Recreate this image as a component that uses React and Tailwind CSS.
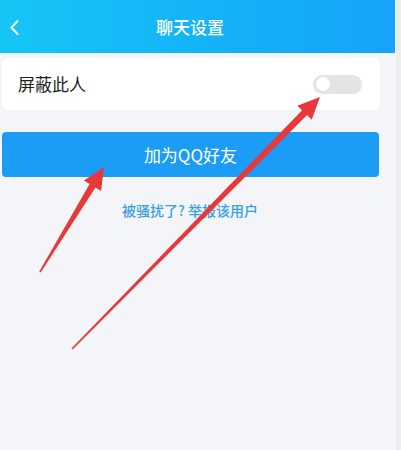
import React from "react";

// Builds a tapered arrow polygon from a tail point to a tip point.
function arrowPoints(tx, ty, px, py) {
  const dx = px - tx;
  const dy = py - ty;
  const len = Math.hypot(dx, dy);
  const ux = dx / len;
  const uy = dy / len;
  const nx = -uy;
  const ny = ux;
  const headLen = 22;
  const headHalf = 10;
  const neckHalf = 3.5;
  const tailHalf = 0.8;
  const bx = px - ux * headLen;
  const by = py - uy * headLen;
  const pts = [
    [tx + nx * tailHalf, ty + ny * tailHalf],
    [bx + nx * neckHalf, by + ny * neckHalf],
    [bx + nx * headHalf, by + ny * headHalf],
    [px, py],
    [bx - nx * headHalf, by - ny * headHalf],
    [bx - nx * neckHalf, by - ny * neckHalf],
    [tx - nx * tailHalf, ty - ny * tailHalf],
  ];
  return pts.map((p) => p.map((v) => v.toFixed(1)).join(",")).join(" ");
}

export default function App() {
  return (
    <div
      className="relative flex h-[450px] w-[401px] overflow-hidden bg-[#eceeee]"
      style={{ fontFamily: '"Noto Sans CJK SC", "Noto Sans", sans-serif' }}
    >
      <div className="flex w-[396px] flex-col bg-[#f3f5f9]">
        {/* Title bar */}
        <div className="relative flex h-[53px] w-[395px] items-center bg-gradient-to-r from-[#16c5f6] to-[#16a2f8]">
          <div className="flex w-[380px] items-center justify-center">
            <span className="text-[17px] font-medium text-white">聊天设置</span>
          </div>
          <svg
            className="absolute left-[9px] top-[19px]"
            width="12"
            height="17"
            viewBox="0 0 12 17"
            fill="none"
          >
            <path
              d="M8.5 2 L2.5 8.5 L8.5 15"
              stroke="white"
              strokeWidth="2"
              strokeLinecap="round"
              strokeLinejoin="round"
            />
          </svg>
        </div>

        {/* Block toggle row */}
        <div className="ml-[2px] mt-[5px] flex h-[52px] w-[378px] items-center justify-between rounded-[6px] bg-white pl-[16px] pr-[18px]">
          <span className="text-[17px] text-[#1d1d1d]">屏蔽此人</span>
          <div className="flex h-[19px] w-[49px] items-center rounded-full bg-[#e4e4e4] pl-[3px]">
            <div className="h-[14px] w-[14px] rounded-full bg-white" />
          </div>
        </div>

        {/* Add friend button */}
        <div className="ml-[2px] mt-[22px] flex h-[45px] w-[377px] items-center justify-center rounded-[4px] bg-[#1b9df6]">
          <span className="text-[17px] text-white">加为QQ好友</span>
        </div>

        {/* Report link */}
        <div className="mt-[23px] flex w-[380px] justify-center">
          <span className="text-[14px] font-medium text-[#3a9fe2]">被骚扰了? 举报该用户</span>
        </div>
      </div>

      {/* Red annotation arrows */}
      <svg
        className="pointer-events-none absolute left-0 top-0"
        width="401"
        height="450"
        viewBox="0 0 401 450"
      >
        <polygon points={arrowPoints(40, 272, 104, 167)} fill="#e8383a" />
        <polygon points={arrowPoints(72, 349, 320, 97)} fill="#e8383a" />
      </svg>
    </div>
  );
}
